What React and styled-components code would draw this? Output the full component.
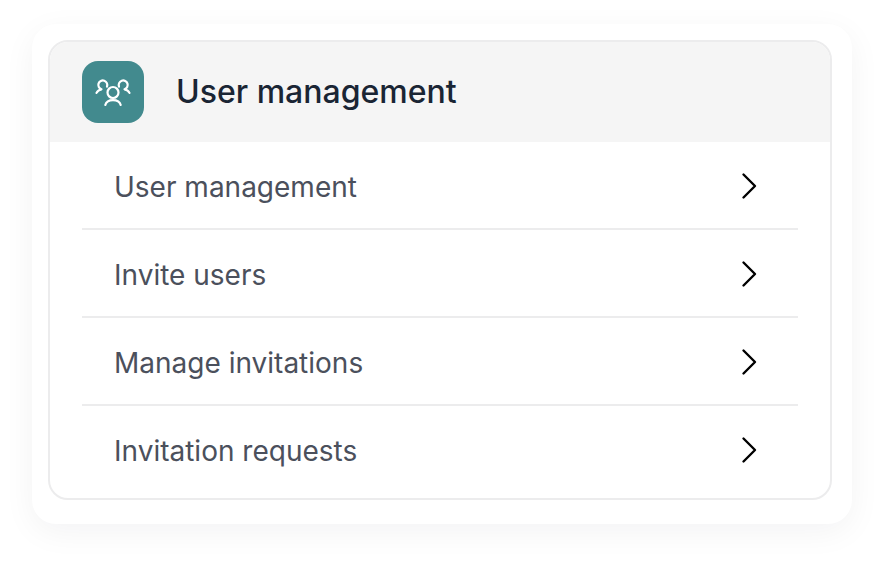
import React from "react";
import styled, { createGlobalStyle } from "styled-components";

const Global = createGlobalStyle`
  html, body { margin: 0; padding: 0; background: #fff; }
  body { width: 884px; height: 564px; overflow: hidden; font-family: Inter, "Liberation Sans", sans-serif; }
`;
const Page = styled.div`
  box-sizing: border-box;
  width: 884px;
  height: 564px;
  padding: 24px 32px 40px;
`;
const Shell = styled.div`
  box-sizing: border-box;
  height: 500px;
  padding: 16px 20px 24px 16px;
  background: #fff;
  border-radius: 24px;
  box-shadow: 0 8px 32px rgba(16, 24, 40, 0.05);
`;
const Card = styled.section`
  box-sizing: border-box;
  height: 460px;
  border: 2px solid #ececed;
  border-radius: 20px;
  overflow: hidden;
  background: #fff;
`;
const Header = styled.header`
  display: flex;
  align-items: center;
  gap: 32px;
  height: 100px;
  padding: 0 32px;
  background: #f5f5f5;
`;
const Badge = styled.div`
  display: flex;
  align-items: center;
  justify-content: center;
  width: 62px;
  height: 62px;
  border-radius: 16px;
  background: #428a8e;
`;
const Title = styled.h1`
  margin: 0;
  font-size: 32px;
  line-height: 40px;
  font-weight: 500;
  color: #1a2534;
`;
const List = styled.ul`
  list-style: none;
  margin: 0;
  padding: 0 32px;
`;
const Row = styled.li`
  box-sizing: border-box;
  display: flex;
  align-items: center;
  justify-content: space-between;
  height: 88px;
  padding: 4px 40px 0 32px;
  border-bottom: 2px solid ${(p) => (p.$last ? "transparent" : "#ececed")};
`;
const Label = styled.span`
  font-size: 28px;
  line-height: 36px;
  font-weight: 400;
  color: #4b505c;
`;
const ChevronSvg = styled.svg`
  display: block;
  margin-top: -2px;
`;

const GroupIcon = () => (
  <svg width="36" height="36" viewBox="0 0 36 36" fill="none" stroke="#fff" strokeWidth="2.200" strokeLinecap="round" strokeLinejoin="round">
    <circle cx="18" cy="18.500" r="5.500" />
    <path d="M10.300 31c.8-3.100 3.900-4.900 7.700-4.900s6.900 1.800 7.700 4.900" />
    <path d="M12 12.600A4.500 4.500 0 1 0 6.500 15.300c-2.400.4-4.100 1.600-5 3.600" />
    <path d="M24 12.600A4.500 4.500 0 1 1 29.500 15.300c2.400.4 4.100 1.600 5 3.600" />
  </svg>
);

const Chevron = () => (
  <ChevronSvg width="18" height="28" viewBox="0 0 18 28" fill="none" stroke="#000" strokeWidth="2.400" strokeLinecap="round" strokeLinejoin="round">
    <path d="M3.500 2.500L15 14 3.500 25.500" />
  </ChevronSvg>
);

const items = ["User management", "Invite users", "Manage invitations", "Invitation requests"];

export default function App() {
  return (
    <Page>
      <Global />
      <Shell>
        <Card>
          <Header>
            <Badge><GroupIcon /></Badge>
            <Title>User management</Title>
          </Header>
          <List>
            {items.map((t, i) => (
              <Row key={t} $last={i === items.length - 1}>
                <Label>{t}</Label>
                <Chevron />
              </Row>
            ))}
          </List>
        </Card>
      </Shell>
    </Page>
  );
}
